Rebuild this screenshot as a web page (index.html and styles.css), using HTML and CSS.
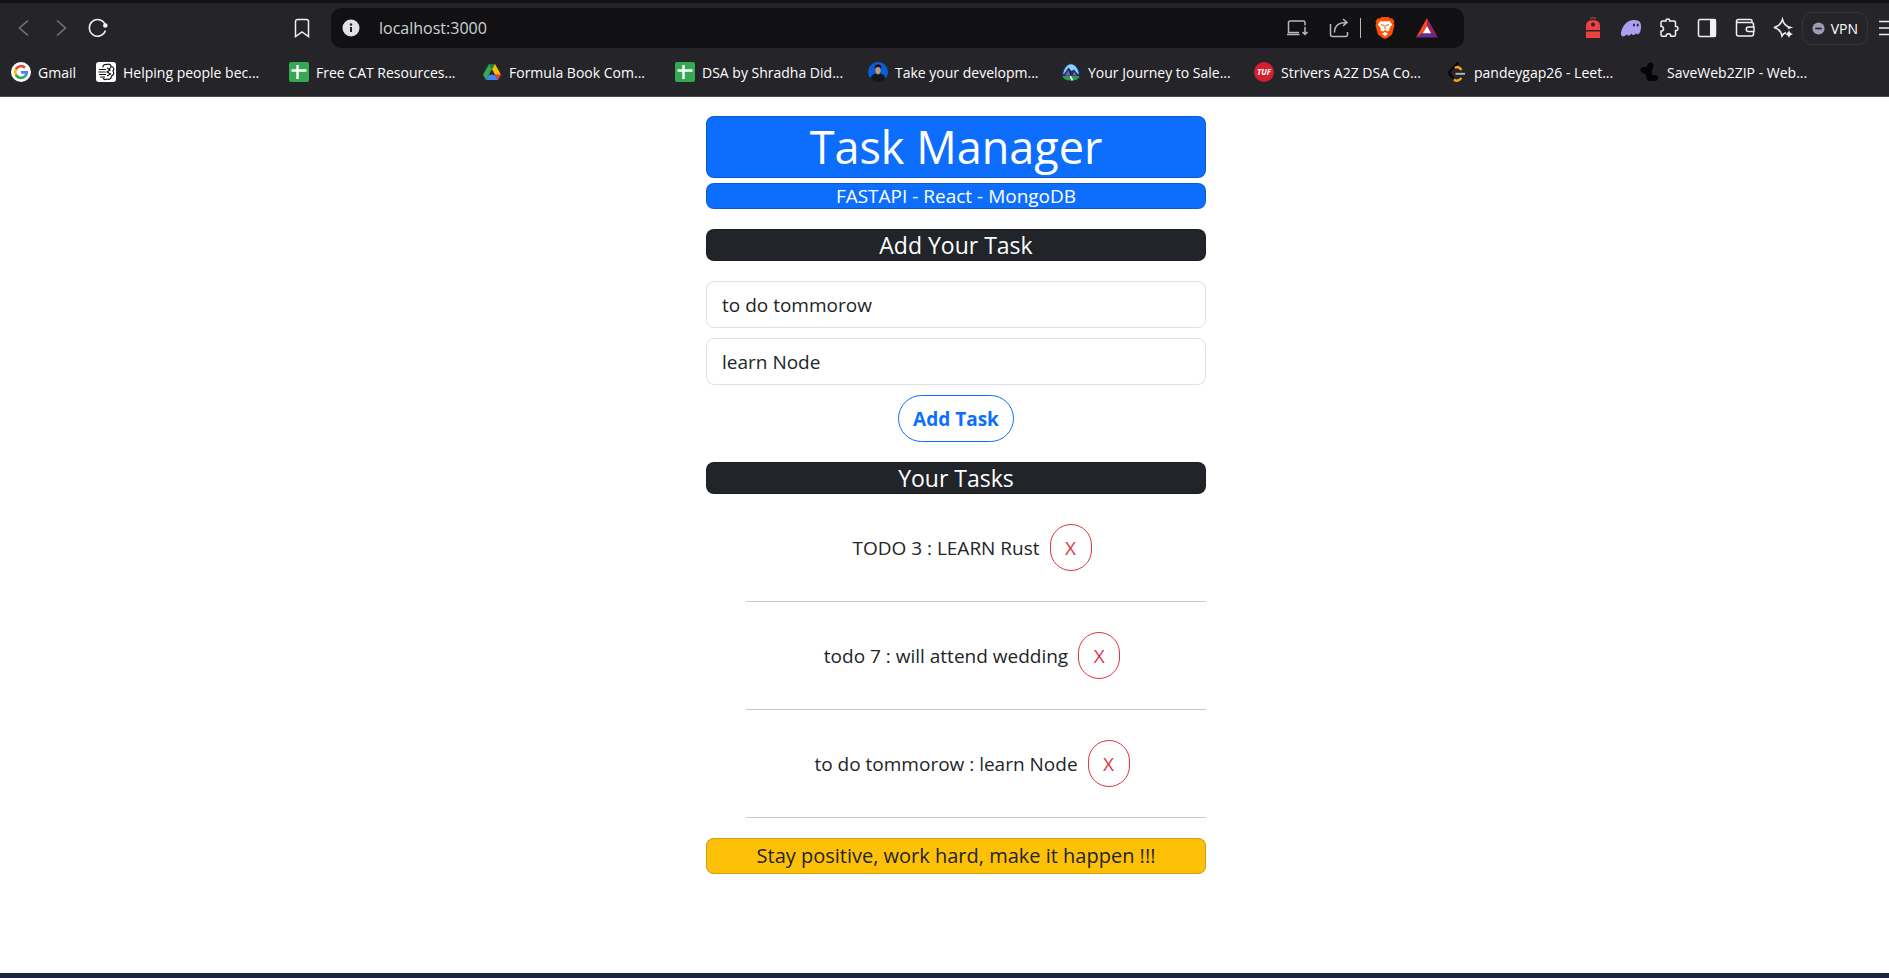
FILE: index.html
```
<!DOCTYPE html>
<html lang="en">
<head>
<meta charset="utf-8">
<meta name="viewport" content="width=device-width, initial-scale=1">
<title>Task Manager</title>
<link rel="stylesheet" href="styles.css">
</head>
<body>
<header class="browser">
  <div class="toolbar">
    <div class="nav-group">
      <button class="icon-btn dim" aria-label="Back"><svg viewBox="0 0 20 20"><path d="M14 2.5 5.500 10l8.500 7.500"/></svg></button>
      <button class="icon-btn dim" aria-label="Forward"><svg viewBox="0 0 20 20"><path d="M6 2.500 14.500 10 6 17.500"/></svg></button>
      <button class="icon-btn" aria-label="Reload"><svg viewBox="0 0 20 20"><path class="bold" d="M17.500 12.500A8.300 8.300 0 1 1 17 6"/><circle class="white" cx="17.300" cy="7.500" r="2.300"/></svg></button>
      <button class="icon-btn push" aria-label="Bookmark"><svg viewBox="0 0 20 20"><path class="bold" d="M5.500 1.500h9a2 2 0 0 1 2 2v15L10 14l-6.500 4.500v-15a2 2 0 0 1 2-2z"/></svg></button>
    </div>
    <div class="address">
      <svg class="glyph info" viewBox="0 0 20 20"><circle class="pale" cx="10" cy="10" r="8.500"/><circle cx="10" cy="6.500" r="1.200" fill="#222"/><path d="M10 9v5" stroke="#222" stroke-width="2"/></svg>
      <input class="url" type="text" aria-label="Address" value="localhost:3000">
      <button class="icon-btn gray" aria-label="Install app"><svg viewBox="0 0 20 20"><path class="bold" d="M12 14.500H1.500V4.500a1.500 1.500 0 0 1 1.500-1.500h13.500a1.500 1.500 0 0 1 1.500 1.500v3M0 16.500h12.500M18 9v7.500m-2.500-2.500 2.500 2.500 2.500-2.500"/></svg></button>
      <button class="icon-btn gray share" aria-label="Share"><svg viewBox="0 0 20 20"><path class="bold" d="M1.500 6v10.500a2 2 0 0 0 2 2h13a2 2 0 0 0 2-2V14M5.500 14.500C5.500 8 9 4.500 17.500 4.500M14 1l4 3.500L14 8"/></svg></button>
      <span class="divider"></span>
      <button class="icon-btn shield" aria-label="Brave Shields"><svg viewBox="0 0 20 22"><path fill="#ff5000" d="M5 1.500 6.500 0h7L15 1.500l2-.3 2.500 3-.8 2 .8 2.300-2.500 9L13 20.500 10 22l-3-1.500-4-3-2.500-9 .8-2.300-.8-2 2.500-3z"/><path fill="#fff" d="m5.500 4 2.500.5L10 4l2 .5 2.500-.5 2.700 3.500-3 4 .3 2-2.500 1-2-1.500-2 1.500-2.500-1 .3-2-3-4z M10 15l3 1.800-3 2.400-3-2.400z"/><path stroke="#ff5000" stroke-width="1" d="m6 7.500 3 1M14 7.500l-3 1M10 8v4.500"/></svg></button>
      <button class="icon-btn bat" aria-label="Brave Rewards"><svg viewBox="0 0 22 20"><path fill="#ff4724" d="M11 0v8L7 15l-7 4.500z"/><path fill="#9e1f63" d="M11 0v8l4 7 7 4.500z"/><path fill="#662d91" d="M0 19.500 7 15h8l7 4.500z"/><path fill="#fff" d="m11 8 4.200 7.200H6.800z"/></svg></button>
    </div>
    <div class="ext-group">
      <button class="icon-btn" aria-label="Extension"><svg viewBox="0 0 20 20"><path fill="#f04040" d="M3 12V8q0-6 7-6t7 6v4zM3 13.500h14V20H3z"/><path d="M7 .3q3-1 6 0" stroke="#f04040"/><circle cx="10" cy="6.500" r="2" fill="#252429"/></svg></button>
      <button class="icon-btn" aria-label="Phantom"><svg viewBox="0 0 20 20"><path fill="#ab9ff2" d="M0 15C1 8 6 2 13 2c5 0 7 2 7 6 0 5-1 7-2.500 8-1.500.8-2.300 0-2.500-1-1 2-3.500 3-4.500.5-1.500 2.500-4 3-4.500.8C4.500 18 2 19 1 18c-.8-.7-1.200-1.500-1-3z"/><ellipse cx="13" cy="7" rx="1" ry="1.500" fill="#252429"/><ellipse cx="16.700" cy="7" rx="1" ry="1.500" fill="#252429"/></svg></button>
      <button class="icon-btn" aria-label="Extensions"><svg viewBox="0 0 20 20"><path class="bold" d="M3.500 3H7q-.5-2 1.800-2t1.800 2h4.400q1.500 0 1.500 1.500v4q2.500-.3 2.500 2t-2.500 2v4q0 1.800-1.500 1.800h-3.200q0-2.500-2.300-2.500T7 18.300H3.500Q2 18.300 2 16.500v-3.300q2.500 0 2.500-2.400T2 8.300V4.500Q2 3 3.500 3z"/></svg></button>
      <button class="icon-btn" aria-label="Sidebar"><svg viewBox="0 0 20 20"><rect class="bold" x="1.500" y="1.500" width="17" height="17" rx="1.500"/><path class="white" d="M13 1h5.500v18H13z"/></svg></button>
      <button class="icon-btn" aria-label="Wallet"><svg viewBox="0 0 20 20"><path class="bold" d="M18.500 9V6.500a2 2 0 0 0-2-2H3a1.500 1.500 0 0 1-1.500-1.500v13a2 2 0 0 0 2 2h13a2 2 0 0 0 2-2v-2.500M1.500 3A1.500 1.500 0 0 1 3 1.500h12.500a1.500 1.500 0 0 1 1.500 1.500v1.500M19 9h-5.500a2.200 2.200 0 0 0 0 4.500H19z"/></svg></button>
      <button class="icon-btn" aria-label="Leo AI"><svg viewBox="0 0 20 20"><path class="bold" d="M13 14.500q-3 1-4 3.500Q7.500 11 1 9.500 7.500 8 9.500 1.500q1.500 6.500 8 8-1.500.5-2.500 1"/><path class="white" d="M16 12q.6 3 4 4-3.400 1-4 4-.6-3-4-4 3.400-1 4-4z"/></svg></button>
      <button class="vpn"><svg class="vpn-dot" viewBox="0 0 14 14"><circle cx="7" cy="7" r="6.500" fill="#9d9bb5"/><path d="M3.500 7h7" stroke="#252429" stroke-width="1.800"/></svg>VPN</button>
      <button class="menu" aria-label="Menu"><svg viewBox="0 0 10 20"><path class="bold" d="M0 3.500h10M0 10h10M0 16.500h10"/></svg></button>
    </div>
  </div>
  <nav class="bookmarks">
    <a class="bookmark first" href="#"><svg class="fav" viewBox="0 0 20 20"><circle cx="10" cy="10" r="10" fill="#fff"/><g stroke-width="2.700"><path stroke="#ea4335" d="M4.800 7.400A5.800 5.800 0 0 1 14 5.800"/><path stroke="#fbbc05" d="M4.800 12.600a5.800 5.800 0 0 1 0-5.200"/><path stroke="#34a853" d="M13.800 14.400a5.800 5.800 0 0 1-9-1.800"/><path stroke="#4285f4" d="M10 10.300h5.800a5.800 5.800 0 0 1-2 4.100"/></g></svg><span>Gmail</span></a>
    <a class="bookmark" href="#"><svg class="fav" viewBox="0 0 20 20"><rect width="20" height="20" rx="3" fill="#fff"/><path stroke="#111" stroke-width="1.200" d="M3 7.500h7M2.500 10h7M3 12.500h7M4 15h5M11 2.500c3-1 4 1 4 2 3 .5 3.500 3 2 4.500 1.500 2 .5 4.500-1.500 5 0 2.500-2 4-4.500 3M11 2.500C8.500 2 6.500 3.500 7 5.500M11 17c-2 1-3.500 0-4-1M11 6l3 2-3 2 3.500 2-3.500 2M15 5l-2 2.500"/></svg><span>Helping people bec...</span></a>
    <a class="bookmark" href="#"><svg class="fav" viewBox="0 0 20 20"><rect width="20" height="20" rx="2" fill="#34a853"/><path stroke="#fff" stroke-width="2.400" d="M8.500 3v14M2.500 8.500h15"/></svg><span>Free CAT Resources...</span></a>
    <a class="bookmark" href="#"><svg class="fav" viewBox="0 0 20 20"><path fill="#188038" d="M7 2h6l-3 5.200z"/><path fill="#34a853" d="m7 2 3 5.200L4 18l-3-5.300z"/><path fill="#fbbc04" d="M13 2 10 7.200l3 5.500h6z"/><path fill="#4285f4" d="m4 18 3-5.300h6L16 18z"/><path fill="#ea4335" d="M13 12.700h6L16 18z"/></svg><span>Formula Book Com...</span></a>
    <a class="bookmark" href="#"><svg class="fav" viewBox="0 0 20 20"><rect width="20" height="20" rx="2" fill="#34a853"/><path stroke="#fff" stroke-width="2.400" d="M8.500 3v14M2.500 8.500h15"/></svg><span>DSA by Shradha Did...</span></a>
    <a class="bookmark" href="#"><svg class="fav" viewBox="0 0 20 20"><circle cx="10" cy="10" r="10" fill="#0b5fd6"/><path fill="#15171c" d="M2.500 16.500q1-4 5-5h5q4 1 5 5Q14.500 20 10 20t-7.500-3.500z"/><path fill="#c99478" d="M7.500 5h5v4.500q-.8 3-2.500 3t-2.500-3z"/><path fill="#17120f" d="M6.800 7V4q3.200-3.500 6.400 0v3q-1-2-3.200-2T6.800 7z"/></svg><span>Take your developm...</span></a>
    <a class="bookmark" href="#"><svg class="fav" viewBox="0 0 20 20"><path fill="#17325e" d="M10 1c5 0 9 6 9.500 11 .5 4-3 7-9.500 7S0 16 .5 12C1 7 5 1 10 1z"/><path fill="#90d0fe" d="M10 2.200c4 0 7.200 5 7.800 9.800H2.200C2.800 7.200 6 2.200 10 2.200z"/><path fill="#17325e" d="m7.500 5.500 3 3.500L13 7.500l5.500 6.500h-17z"/><path fill="#7f5bb5" d="m7.300 8 2 5.500H4zM13 9.500l2.500 4h-4z"/><path fill="#2e9b4f" d="M1.500 14h17q-1 4.500-8.500 4.500T1.500 14z"/><path stroke="#fff" stroke-width="1.500" d="m9.500 14 .5 2 1 1v1.500"/></svg><span>Your Journey to Sale...</span></a>
    <a class="bookmark" href="#"><svg class="fav" viewBox="0 0 20 20"><circle cx="10" cy="10" r="10" fill="#d41f30"/><text class="tuf" x="10" y="13" text-anchor="middle">TUF</text></svg><span>Strivers A2Z DSA Co...</span></a>
    <a class="bookmark" href="#"><svg class="fav" viewBox="0 0 20 20"><path stroke="#080808" stroke-width="2.400" d="m11.500.5-8.500 8.500q-1.500 1.700 0 3.500l3.500 4"/><path stroke="#ffa116" stroke-width="2.400" d="M8 6q3-2.500 6.500 2M7 17.500q3.500 3 7.500-1.500"/><path stroke="#b3b3b3" stroke-width="2" d="M8.500 11.800H18"/></svg><span>pandeygap26 - Leet...</span></a>
    <a class="bookmark" href="#"><svg class="fav" viewBox="0 0 20 20"><path stroke="#050505" stroke-width="6" stroke-linecap="round" stroke-linejoin="round" d="M10.500 3.500 9 8.500 3.500 8l5 2.500 1 5.500h5.500"/></svg><span>SaveWeb2ZIP - Web...</span></a>
  </nav>
</header>
<main class="page">
  <div class="manager">
    <h1 class="card blue title">Task Manager</h1>
    <h6 class="card blue subtitle">FASTAPI - React - MongoDB</h6>
    <h5 class="card dark">Add Your Task</h5>
    <form class="task-form">
      <input class="field" type="text" aria-label="Title" value="to do tommorow">
      <input class="field" type="text" aria-label="Description" value="learn Node">
      <button class="add" type="button">Add Task</button>
    </form>
    <h5 class="card dark">Your Tasks</h5>
    <ul class="tasks">
      <li class="task"><span>TODO 3 : LEARN Rust</span><button class="remove">X</button></li>
      <li class="task"><span>todo 7 : will attend wedding</span><button class="remove">X</button></li>
      <li class="task"><span>to do tommorow : learn Node</span><button class="remove">X</button></li>
    </ul>
    <h6 class="card yellow">Stay positive, work hard, make it happen !!!</h6>
  </div>
</main>
<div class="taskbar"></div>
</body>
</html>
```
FILE: styles.css
```
* { box-sizing: border-box; }
body {
  margin: 0;
  min-height: 100vh;
  display: flex;
  flex-direction: column;
  overflow-x: hidden;
  background: #fff;
  color: #212529;
  font-family: "Trebuchet MS", "Open Sans", sans-serif;
  font-size: 19px;
}
button, input { font: inherit; color: inherit; margin: 0; }
button { padding: 0; border: 0; background: none; cursor: pointer; }
svg { display: block; fill: none; overflow: visible; }

.browser {
  border-top: 3px solid #111113;
  border-bottom: 1px solid #4b4b4f;
  background: #252429;
  color: #fff;
  font-family: "Segoe UI", "Open Sans", sans-serif;
  font-size: 14px;
}
.toolbar { display: flex; align-items: center; padding-top: 5px; }
.nav-group { flex: 0 0 331px; display: flex; gap: 17px; padding: 0 19px 0 14px; }
.push { margin-left: auto; }
.icon-btn { flex: none; width: 20px; height: 20px; }
.icon-btn svg { width: 100%; height: 100%; stroke: #f0f0f2; }
.dim svg { stroke: #77767b; stroke-width: 1.5; }
.gray svg { stroke: #b9b9bd; }
.bold { stroke-width: 1.5; }
.icon-btn .white { fill: #f2f2f4; stroke: none; }
.pale { fill: #e2e1e8; }
.icon-btn [fill] { stroke: none; }

.address {
  flex: 1;
  min-width: 0;
  height: 40px;
  display: flex;
  align-items: center;
  padding: 0 26px 0 10px;
  border-radius: 10px;
  background: #111113;
}
.glyph { width: 20px; height: 20px; }
.url {
  flex: 1;
  min-width: 0;
  padding: 0 0 0 18px;
  border: 0;
  outline: 0;
  background: transparent;
  color: #d2d2d6;
  font-size: 16px;
}
.share { margin-left: 22px; }
.divider { width: 1px; height: 20px; margin: 0 14px 0 11px; background: #b9b9bd; }
.shield { height: 22px; }
.bat { width: 22px; margin-left: 21px; }

.ext-group { flex: none; display: flex; align-items: center; gap: 18px; padding-left: 119px; }
.vpn {
  display: flex;
  align-items: center;
  gap: 6px;
  height: 33px;
  margin: 0 -7px 0 -9px;
  padding: 0 9px;
  border: 1px solid #34333a;
  border-radius: 10px;
}
.vpn-dot { width: 13px; height: 13px; }
.menu { width: 10px; height: 20px; }
.menu svg { width: 100%; height: 100%; stroke: #f0f0f2; }

.bookmarks { display: flex; height: 48px; padding-left: 11px; }
.bookmark {
  flex: 0 0 193px;
  display: flex;
  align-items: center;
  gap: 7px;
  color: #fff;
  text-decoration: none;
  white-space: nowrap;
}
.first { flex-basis: 85px; }
.fav { flex: none; width: 20px; height: 20px; }
.tuf { fill: #fff; font: italic 700 8px "Open Sans", sans-serif; }

.page { flex: 1; display: flex; justify-content: center; padding: 19px 0 20px 23px; }
.manager { width: 500px; max-width: 100%; text-align: center; }
.card {
  margin: 0;
  border: 1px solid rgba(0, 0, 0, 0.18);
  border-radius: 8px;
  font-weight: 400;
}
.blue { background: #0d6efd; color: #fff; }
.title { font-size: 45px; line-height: 60px; }
.subtitle { margin-top: 5px; font-size: 19px; line-height: 24px; }
.dark { margin-top: 20px; background: #212529; color: #fff; font-size: 23px; line-height: 30px; }
.yellow { background: #ffc107; font-size: 20px; line-height: 34px; }

.task-form { display: flex; flex-direction: column; align-items: center; gap: 10px; margin-top: 20px; }
.field {
  width: 100%;
  height: 47px;
  padding: 0 15px;
  border: 1px solid #dee2e6;
  border-radius: 8px;
  background: #fff;
}
.add {
  height: 47px;
  padding: 0 14px;
  border: 1px solid #0d6efd;
  border-radius: 24px;
  color: #0d6efd;
  font-weight: 700;
}
.tasks { margin: 0 0 20px 40px; padding: 0; list-style: none; }
.task {
  display: flex;
  justify-content: center;
  align-items: center;
  gap: 10px;
  padding: 30px 8px 30px 0;
  border-bottom: 1px solid #c8c9ca;
}
.remove {
  width: 42px;
  height: 47px;
  border: 1px solid #dc3545;
  border-radius: 21px;
  color: #dc3545;
}
.taskbar { height: 5px; background: #1b2342; }
```
